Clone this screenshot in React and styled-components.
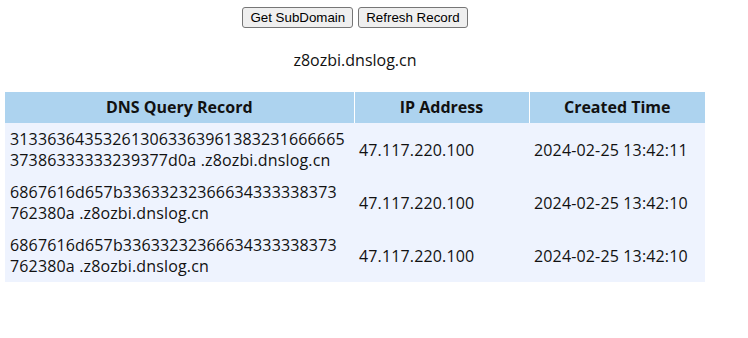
import React from "react";
import styled, { createGlobalStyle } from "styled-components";

const GlobalStyle = createGlobalStyle`
  html, body {
    margin: 0;
    padding: 0;
    background: #ffffff;
  }
  body {
    font-family: "Open Sans", "Noto Sans", sans-serif;
    color: #111111;
  }
`;

const Page = styled.div`
  width: 700px;
  margin-left: 5px;
  padding-top: 7px;
  display: flex;
  flex-direction: column;
  align-items: center;
`;

const Toolbar = styled.div`
  display: flex;
  gap: 5px;
  justify-content: center;
`;

const Button = styled.button`
  font-family: "Liberation Sans", Arial, sans-serif;
  font-size: 13.333px;
  color: #000000;
  height: 21px;
  padding: 0 7px;
  background: #efefef;
  border: 1px solid #767676;
  border-radius: 3px;
  line-height: 19px;
  cursor: pointer;
`;

const SubDomain = styled.div`
  margin-top: 22px;
  font-size: 16px;
  line-height: 21px;
  color: #111111;
  text-align: center;
`;

const Table = styled.table`
  margin-top: 21px;
  width: 700px;
  border-collapse: collapse;
  border-spacing: 0;
  table-layout: fixed;
  font-size: 16px;
  line-height: 21px;
`;

const HeadCell = styled.th`
  background: #add3ef;
  font-weight: 700;
  text-align: center;
  padding: 5px 5px;
  height: 21px;
  color: #111111;
  border-left: ${(p) => (p.$first ? "none" : "1px solid #ffffff")};
`;

const BodyRow = styled.tr`
  background: #eef3fe;
`;

const Cell = styled.td`
  padding: 6px 5px 5px;
  text-align: left;
  vertical-align: middle;
  letter-spacing: 0.15px;
  color: #111111;
  white-space: nowrap;
`;

const Line = styled.span`
  display: block;
  line-height: 21px;
`;

const hex = (pairs) => pairs.join("");

const q1 = hex(["31","33","63","64","35","32","61","30","63","36","39","61","38","32","31","66","66","65"]);
const q1b = hex(["37","38","63","33","33","32","39","37","7d","0a"]);
const q2full = hex(["68","67","61","6d","65","7b","33","63","32","32","36","66","34","33","33","38","37","37","62","38","0a"]);
const q2a = q2full.slice(0, 35);
const q2b = q2full.slice(35);

const records = [
  { lines: [q1, q1b + " .z8ozbi.dnslog.cn"], ip: "47.117.220.100", time: "2024-02-25 13:42:11" },
  { lines: [q2a, q2b + " .z8ozbi.dnslog.cn"], ip: "47.117.220.100", time: "2024-02-25 13:42:10" },
  { lines: [q2a, q2b + " .z8ozbi.dnslog.cn"], ip: "47.117.220.100", time: "2024-02-25 13:42:10" },
];

export default function App() {
  return (
    <>
      <GlobalStyle />
      <Page>
        <Toolbar>
          <Button>Get SubDomain</Button>
          <Button>Refresh Record</Button>
        </Toolbar>
        <SubDomain>z8ozbi.dnslog.cn</SubDomain>
        <Table>
          <colgroup>
            <col style={{ width: 349 }} />
            <col style={{ width: 175 }} />
            <col style={{ width: 176 }} />
          </colgroup>
          <thead>
            <tr>
              <HeadCell $first>DNS Query Record</HeadCell>
              <HeadCell>IP Address</HeadCell>
              <HeadCell>Created Time</HeadCell>
            </tr>
          </thead>
          <tbody>
            {records.map((r, i) => (
              <BodyRow key={i}>
                <Cell>
                  {r.lines.map((l, j) => (
                    <Line key={j}>{l}</Line>
                  ))}
                </Cell>
                <Cell>{r.ip}</Cell>
                <Cell>{r.time}</Cell>
              </BodyRow>
            ))}
          </tbody>
        </Table>
      </Page>
    </>
  );
}
